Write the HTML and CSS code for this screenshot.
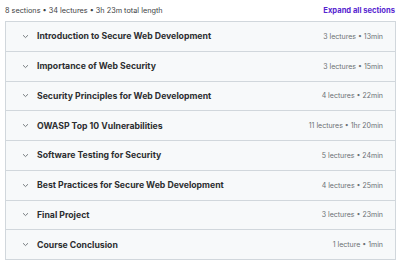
FILE: index.html
```html
<!DOCTYPE html>
<html>
<head>
<meta charset="utf-8">
<link rel="stylesheet" href="styles.css">
</head>
<body>
<div class="page">
  <div class="head">
    <span class="summary">8 sections • 34 lectures • 3h 23m total length</span>
    <span class="expand">Expand all sections</span>
  </div>
  <div class="list">
    <div class="row"><span class="chev"><svg width="7" height="5" viewBox="0 0 7 5"><path d="M1 1.2 L3.5 3.6 L6 1.2" fill="none" stroke="#6a6f73" stroke-width="0.9"/></svg></span><span class="title">Introduction to Secure Web Development</span><span class="meta">3 lectures • 13min</span></div>
    <div class="row"><span class="chev"><svg width="7" height="5" viewBox="0 0 7 5"><path d="M1 1.2 L3.5 3.6 L6 1.2" fill="none" stroke="#6a6f73" stroke-width="0.9"/></svg></span><span class="title">Importance of Web Security</span><span class="meta">3 lectures • 15min</span></div>
    <div class="row"><span class="chev"><svg width="7" height="5" viewBox="0 0 7 5"><path d="M1 1.2 L3.5 3.6 L6 1.2" fill="none" stroke="#6a6f73" stroke-width="0.9"/></svg></span><span class="title">Security Principles for Web Development</span><span class="meta">4 lectures • 22min</span></div>
    <div class="row"><span class="chev"><svg width="7" height="5" viewBox="0 0 7 5"><path d="M1 1.2 L3.5 3.6 L6 1.2" fill="none" stroke="#6a6f73" stroke-width="0.9"/></svg></span><span class="title">OWASP Top 10 Vulnerabilities</span><span class="meta">11 lectures • 1hr 20min</span></div>
    <div class="row"><span class="chev"><svg width="7" height="5" viewBox="0 0 7 5"><path d="M1 1.2 L3.5 3.6 L6 1.2" fill="none" stroke="#6a6f73" stroke-width="0.9"/></svg></span><span class="title">Software Testing for Security</span><span class="meta">5 lectures • 24min</span></div>
    <div class="row"><span class="chev"><svg width="7" height="5" viewBox="0 0 7 5"><path d="M1 1.2 L3.5 3.6 L6 1.2" fill="none" stroke="#6a6f73" stroke-width="0.9"/></svg></span><span class="title">Best Practices for Secure Web Development</span><span class="meta">4 lectures • 25min</span></div>
    <div class="row"><span class="chev"><svg width="7" height="5" viewBox="0 0 7 5"><path d="M1 1.2 L3.5 3.6 L6 1.2" fill="none" stroke="#6a6f73" stroke-width="0.9"/></svg></span><span class="title">Final Project</span><span class="meta">3 lectures • 23min</span></div>
    <div class="row"><span class="chev"><svg width="7" height="5" viewBox="0 0 7 5"><path d="M1 1.2 L3.5 3.6 L6 1.2" fill="none" stroke="#6a6f73" stroke-width="0.9"/></svg></span><span class="title">Course Conclusion</span><span class="meta">1 lecture • 1min</span></div>
  </div>
</div>
</body>
</html>
```
FILE: styles.css
```css
html, body { margin: 0; padding: 0; background: #fff; }
body { font-family: Inter, "Liberation Sans", sans-serif; color: #2d2f31; }
.page { padding: 0 4px 0 5px; width: 391px; }
.head { display: flex; justify-content: space-between; align-items: center; height: 21px; }
.summary { font-size: 7.3px; color: #3e4143; }
.expand { font-size: 7.6px; font-weight: 700; color: #5624d0; margin-right: 1px; }
.list { border: 1px solid #d1d7dc; border-bottom: none; }
.row { display: flex; align-items: center; height: 28.75px; border-bottom: 1px solid #d1d7dc; background: #f7f9fa; padding: 0 12px 0 16px; }
.chev { width: 7px; height: 5px; display: flex; margin-right: 8px; }
.chev svg { display: block; }
.title { font-size: 8.7px; font-weight: 700; color: #2d2f31; flex: 1; }
.meta { font-size: 7px; color: #6a6f73; }
```
